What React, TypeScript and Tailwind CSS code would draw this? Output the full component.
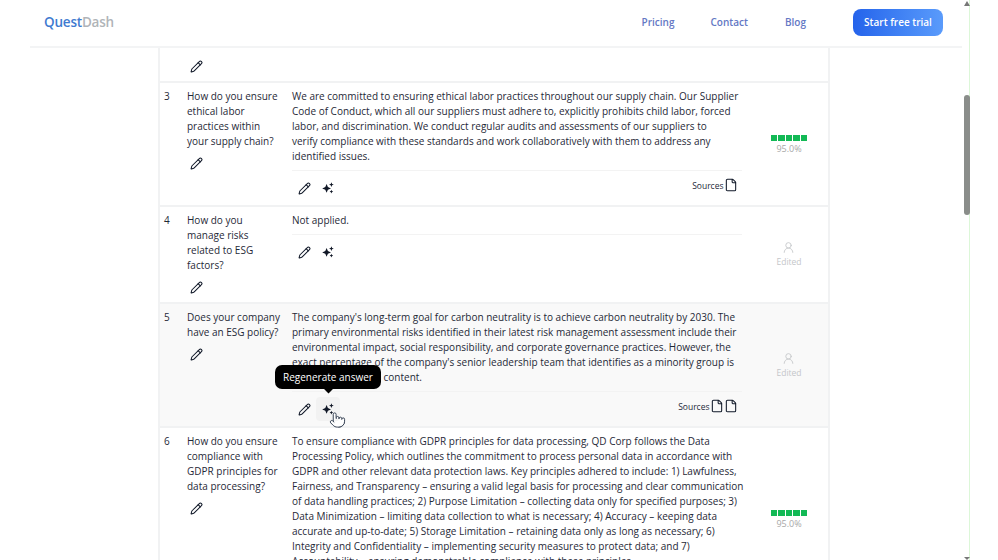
import React from 'react';
import { Pencil, File, UserRound, Pointer } from 'lucide-react';

interface QuestionRow {
    id: number;
    question: string[];
    answer: string[];
    score?: string;
    sources: number;
    shaded?: boolean;
    hovered?: boolean;
}

const rows: QuestionRow[] = [
    {
        id: 3,
        question: ['How do you ensure', 'ethical labor', 'practices within', 'your supply chain?'],
        answer: [
            'We are committed to ensuring ethical labor practices throughout our supply chain. Our Supplier',
            'Code of Conduct, which all our suppliers must adhere to, explicitly prohibits child labor, forced',
            'labor, and discrimination. We conduct regular audits and assessments of our suppliers to',
            'verify compliance with these standards and work collaboratively with them to address any',
            'identified issues.',
        ],
        score: '95.0%',
        sources: 1,
    },
    {
        id: 4,
        question: ['How do you', 'manage risks', 'related to ESG', 'factors?'],
        answer: ['Not applied.'],
        sources: 0,
    },
    {
        id: 5,
        question: ['Does your company', 'have an ESG policy?'],
        answer: [
            "The company's long-term goal for carbon neutrality is to achieve carbon neutrality by 2030. The",
            'primary environmental risks identified in their latest risk management assessment include their',
            'environmental impact, social responsibility, and corporate governance practices. However, the',
            "exact percentage of the company's senior leadership team that identifies as a minority group is",
            'not specified in the content.',
        ],
        sources: 2,
        shaded: true,
        hovered: true,
    },
    {
        id: 6,
        question: ['How do you ensure', 'compliance with', 'GDPR principles for', 'data processing?'],
        answer: [
            'To ensure compliance with GDPR principles for data processing, QD Corp follows the Data',
            'Processing Policy, which outlines the commitment to process personal data in accordance with',
            'GDPR and other relevant data protection laws. Key principles adhered to include: 1) Lawfulness,',
            'Fairness, and Transparency – ensuring a valid legal basis for processing and clear communication',
            'of data handling practices; 2) Purpose Limitation – collecting data only for specified purposes; 3)',
            'Data Minimization – limiting data collection to what is necessary; 4) Accuracy – keeping data',
            'accurate and up-to-date; 5) Storage Limitation – retaining data only as long as necessary; 6)',
            'Integrity and Confidentiality – implementing security measures to protect data; and 7)',
            'Accountability – ensuring demonstrable compliance with these principles.',
        ],
        score: '95.0%',
        sources: 1,
    },
];

const Sparkle = () => (
    <svg width="12" height="12" viewBox="0 0 12 12" fill="#111827">
        <path d="M4.6 2 L5.9 5.1 L9 6.4 L5.9 7.7 L4.6 10.8 L3.3 7.7 L0.2 6.4 L3.3 5.1 Z" />
        <path d="M9.4 0.2 L10.1 1.9 L11.8 2.6 L10.1 3.3 L9.4 5 L8.7 3.3 L7 2.6 L8.7 1.9 Z" />
        <path d="M9.4 7.8 L9.95 9.05 L11.2 9.6 L9.95 10.15 L9.4 11.4 L8.85 10.15 L7.6 9.6 L8.85 9.05 Z" />
    </svg>
);

const EditIcon = () => <Pencil className="w-[13px] h-[13px] text-gray-900" strokeWidth={1.9} />;

const Score = ({ value }: { value: string }) => (
    <div className="flex flex-col items-center pt-px">
        <div className="flex gap-px">
            {[0, 1, 2, 3, 4].map((i) => (
                <div key={i} className="w-[6.5px] h-[6px] bg-[#12b955]"></div>
            ))}
        </div>
        <div className="text-[9px] leading-[13px] mt-px text-[#a8a8a8]">{value}</div>
    </div>
);

const Edited = () => (
    <div className="flex flex-col items-center text-[#c4c6c9]">
        <UserRound className="w-[13px] h-[13px]" strokeWidth={1.6} />
        <div className="text-[8.5px] leading-[13px] mt-[1px]">Edited</div>
    </div>
);

const Row = ({ row }: { row: QuestionRow }) => (
    <div className={`grid grid-cols-[23px_105px_450px_1fr] pl-[4px] border-b-2 border-[#f1f2f3] ${row.shaded ? 'bg-[#f9f9f9]' : 'bg-white'}`}>
        <div className="pt-[6px]">{row.id}</div>
        <div className="pt-[6px]">
            {row.question.map((line) => (
                <div key={line} className="whitespace-nowrap">{line}</div>
            ))}
            <div className="mt-[8px] pl-[3px] pb-[8px]"><EditIcon /></div>
        </div>
        <div className="pt-[6px] pb-[8px]">
            <div className="border-b border-[#f3f3f3] pb-[6px]">
                {row.answer.map((line) => (
                    <div key={line} className="whitespace-nowrap">{line}</div>
                ))}
            </div>
            <div className="flex items-center mt-[8px] pl-[6px] h-[18px]">
                <div className="w-[24px]"><EditIcon /></div>
                {row.hovered ? (
                    <div className="relative w-[12px] h-[12px]">
                        <div className="absolute -inset-[6px] rounded bg-[#f2f2f2]"></div>
                        <div className="relative"><Sparkle /></div>
                        <div className="absolute left-[-47px] top-[-38px] w-[106px] h-[24px] rounded-[7px] bg-black text-white flex items-center justify-center whitespace-nowrap">
                            Regenerate answer
                            <div className="absolute left-[49.5px] top-[20px] w-[7px] h-[7px] rotate-45 bg-black"></div>
                        </div>
                        <Pointer className="absolute left-[7px] top-[8px] w-[17px] h-[18px] text-gray-700 fill-white" strokeWidth={1.4} />
                    </div>
                ) : (
                    <Sparkle />
                )}
                {row.sources > 0 && (
                    <div className="ml-auto mr-[4.5px] -mt-[6px] flex items-center text-[8.5px] text-gray-800">
                        Sources
                        <div className="flex">
                            {Array.from({ length: row.sources }).map((_, i) => (
                                <File key={i} className="w-[14px] h-[14px] text-gray-900" strokeWidth={1.8} />
                            ))}
                        </div>
                    </div>
                )}
            </div>
        </div>
        <div className="flex items-center justify-center pl-[8px]">
            {row.score ? <Score value={row.score} /> : <Edited />}
        </div>
    </div>
);

const App: React.FC = () => {
    return (
        <div className="w-[998px] h-[560px] overflow-hidden bg-white flex font-['Open_Sans','Noto_Sans',sans-serif] text-[10px] leading-[15px] text-[#1f2937]">
            <div className="w-[962px] pl-[30px] flex flex-col shrink-0">
                {/* Header */}
                <div className="h-[48px] shrink-0 flex items-center border-b-2 border-[#f3f4f5] pl-[14px] pr-[19px] pb-[1px] bg-white">
                    <div className="text-[13.5px] font-semibold tracking-[-0.2px]">
                        <span className="text-[#3f7bd0]">Quest</span>
                        <span className="text-[#b0b4b8]">Dash</span>
                    </div>
                    <div className="ml-auto flex items-center text-[10px] font-semibold text-[#6478c4]">
                        <span>Pricing</span>
                        <span className="ml-[36px]">Contact</span>
                        <span className="ml-[37px]">Blog</span>
                        <div className="ml-[47px] w-[90px] h-[27px] rounded-lg bg-gradient-to-r from-[#2563eb] to-[#5a9bfb] text-white flex items-center justify-center">
                            Start free trial
                        </div>
                    </div>
                </div>
                {/* Table */}
                <div className="flex-1 overflow-hidden pl-[128px]">
                    <div className="w-[672px] border-l-2 border-r-2 border-[#f1f2f3] box-border">
                        <div className="h-[35px] overflow-hidden border-b-2 border-[#f1f2f3] pl-[30px] pt-[12px]">
                            <EditIcon />
                        </div>
                        {rows.map((row) => (
                            <Row key={row.id} row={row} />
                        ))}
                    </div>
                </div>
            </div>
            {/* Scrollbar */}
            <div className="w-[7px] border-r border-[#dcf7d8] box-content relative">
                <div className="absolute left-[2px] top-[95px] w-[6px] h-[120px] rounded-full bg-[#8a8d8a]"></div>
                <div className="absolute left-[2px] top-[1px] w-0 h-0 border-l-[3px] border-r-[3px] border-b-[5px] border-l-transparent border-r-transparent border-b-[#777]"></div>
                <div className="absolute left-[2px] bottom-0 w-0 h-0 border-l-[3px] border-r-[3px] border-t-[3px] border-l-transparent border-r-transparent border-t-[#777]"></div>
            </div>
        </div>
    );
};

export default App;
